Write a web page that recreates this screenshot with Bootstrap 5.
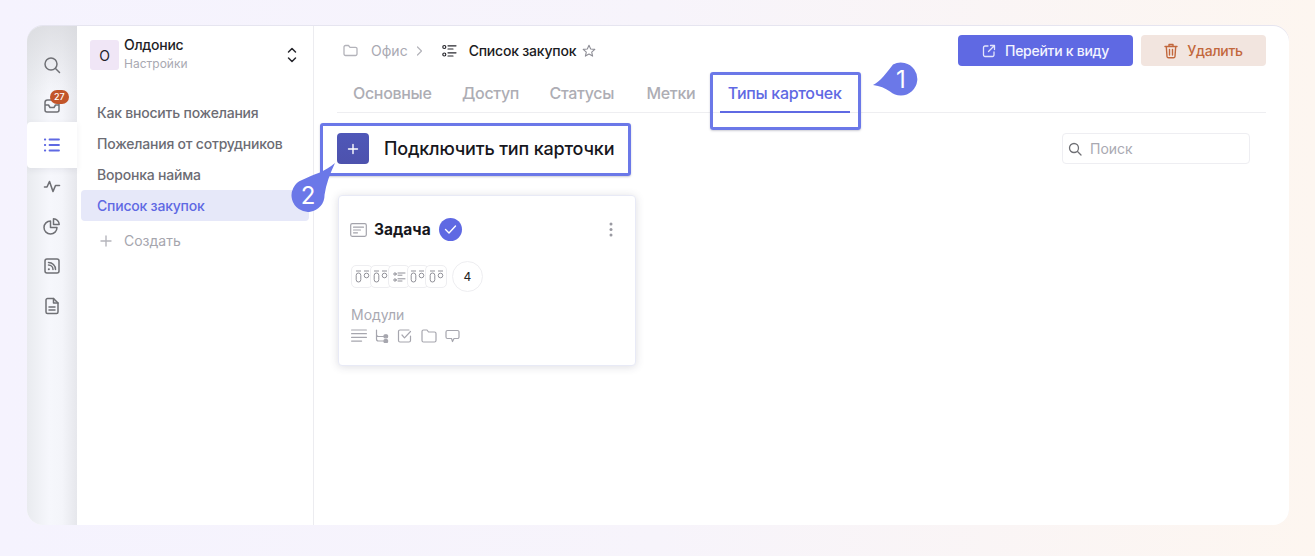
<!DOCTYPE html>
<html lang="ru">
<head>
<meta charset="utf-8">
<title>Типы карточек</title>
<link href="https://cdn.jsdelivr.net/npm/bootstrap@5.3.0/dist/css/bootstrap.min.css" rel="stylesheet">
<style>
html,body{height:100%}
body{margin:0;overflow:hidden;font-family:Inter,"Liberation Sans",sans-serif;background:linear-gradient(90deg,#f5f3fe 0%,#f7f4fb 50%,#fdf6f0 100%);padding:26px 26px 31px 27px}
.app-win{height:499px;background:#fff;border-radius:16px;overflow:hidden;box-shadow:0 -1px 0 #e6e5f0}
.rail{width:50px;flex:none;padding-top:19px;background:linear-gradient(180deg,rgba(215,216,220,.75) 0,rgba(240,241,245,0) 70px),linear-gradient(90deg,#e9ebef 0,#f6f7fc 45%,#f4f5fa 70%,#e6e7ec 100%)}
.rail-btn{height:40px;display:flex;align-items:center;justify-content:center;position:relative;color:#6f7075}
.rail-btn svg{width:18px;height:18px}
.rail-on{height:46px;margin:-3px 0 -2px;background:#fff;border-radius:4px 0 0 4px;color:#5f69e3;box-shadow:0 2px 6px rgba(60,60,90,.08)}
.rail-badge{position:absolute;left:23px;top:5px;background:#c2552a;font-size:9px;font-weight:500;padding:2px 4px;line-height:10px}
.side{width:237px;flex:none;border-right:1px solid #ececf0;padding:13px 4px 0}
.org-ava{width:29px;height:30px;border-radius:3px;background:#f0e6f6;color:#22222a;font-size:14px;flex:none}
.org-txt{margin-left:5px;flex-grow:1}
.org-name{font-size:14px;font-weight:500;letter-spacing:-.02em;line-height:17px;color:#1e1e26;margin-top:-3px}
.org-sub{font-size:12px;line-height:15px;color:#a9a9b2;margin-top:3px}
.side-head{padding:0 11px 0 9px;margin-bottom:26px}
.side-link{height:31px;padding:0 16px;font-size:14px;font-weight:450;letter-spacing:-.015em;line-height:31px;color:#6c6c74;border-radius:4px;text-decoration:none;display:block}
.side-on{background:#e6e8f9;color:#5f69e3}
.side-add{color:#a6a6ae;margin-top:4px;padding-left:18px;display:flex;align-items:center;gap:11px;letter-spacing:0;font-weight:400}
.main-pane{padding:9px 23px 0;min-width:0}
.crumbs{height:31px;padding-left:6px;font-size:14px;color:#a9a9b2}
.crumb-a{margin-left:13px}
.crumb-b{margin-left:11px}
.crumb-c{margin-left:12px;color:#1b1b22;font-weight:500;letter-spacing:-.015em}
.crumb-d{margin-left:6px}
.btn-go,.btn-del{height:31px;font-size:14px;font-weight:500;letter-spacing:-.02em;border:0;border-radius:4px;display:flex;align-items:center;justify-content:center;gap:9px;padding:0}
.btn-go{width:175px;background:#5f69e3;color:#f3f4ff}
.btn-del{width:125px;background:#f2e5df;color:#c2673c;margin-left:8px}
.tabs-row{height:47px;border-bottom:1px solid #eeeef1;padding-left:8px;gap:14.5px;flex-wrap:nowrap}
.tab-lnk{height:47px;padding:0 8px;line-height:54px;font-size:16px;font-weight:500;letter-spacing:-.02em;color:#adadb4;text-decoration:none;position:relative}
.tab-gap{margin-left:2px}
.tab-on{color:#5f69e3;border-bottom:2px solid #5f69e3;height:47px;margin-left:2px}
.add-row{padding-top:20px;padding-right:16px}
.add-sq{width:32px;height:31px;border-radius:4px;background:linear-gradient(180deg,#4f57b8,#4d52ad);color:#fff;border:0;padding:0;display:flex;align-items:center;justify-content:center}
.add-txt{font-size:18px;font-weight:450;letter-spacing:-.01em;color:#17171d;margin-left:15px}
.find-wrap{width:188px;height:31px;border:1px solid #eeeef2;border-radius:4px;padding:0 5px;gap:8px}
.find-input{border:0;outline:0;padding:0;background:transparent;font-size:14px;box-shadow:none;height:28px;color:#333}
.find-input::placeholder{color:#a9a9b2;opacity:1}
.type-card{width:298px;height:171px;margin:31px 0 0 1px;padding:22px 11px 0;border:1px solid #e8eaf6;border-radius:4px;box-shadow:0 1px 8px rgba(50,50,80,.16)}
.type-title{font-size:15.5px;font-weight:700;color:#17171d;margin:1px 0 0 7px}
.type-check{width:23px;height:23px;border-radius:50%;background:#5f69e3;margin-left:8px;display:flex;align-items:center;justify-content:center}
.chip-row{margin:20px 0 0 1px}
.chip{height:23px;width:22px;border:1px solid #eeeef1;border-radius:5px;background:#fff;margin-right:-3.5px;display:flex;align-items:center;justify-content:center}
.chip-end{margin-right:0}
.count-dot{width:31px;height:31px;border:1px solid #eeeef1;border-radius:50%;font-size:12px;margin-left:5px;color:#222}
.mod-lbl{font-size:14px;line-height:17px;color:#a9a9b2;margin:14px 0 0 1px}
.mod-icons{gap:8px;margin:6px 0 0 1px;color:#a6a6ae}
.dots-ico{margin-right:11px}
.mark-box{position:absolute;border:3px solid #6b78e8;border-radius:3px;box-shadow:0 1px 2px rgba(60,60,90,.25);pointer-events:none}
.mark-tab{left:683px;top:46px;width:151px;height:58px}
.mark-add{left:293px;top:97px;width:311px;height:53px}
.call-out{position:absolute;width:50px;height:56px}
.call-one{left:843px;top:34px}
.call-two{left:263px;top:134px}
.call-out text{font-family:Inter,"Liberation Sans",sans-serif;font-size:24px;fill:#fff;text-anchor:middle}
</style>
</head>
<body>
<div class="app-win d-flex position-relative">
  <nav class="rail">
    <div class="rail-btn"><svg viewBox="0 0 18 18" fill="none" stroke="currentColor" stroke-width="1.5" stroke-linecap="round"><circle cx="8" cy="8" r="6"/><path d="M12.500 12.500 16.500 16.500"/></svg></div>
    <div class="rail-btn"><svg viewBox="0 0 18 18" fill="none" stroke="currentColor" stroke-width="1.5" stroke-linejoin="round"><path d="M2 6.500V14a2 2 0 0 0 2 2h10a2 2 0 0 0 2-2V6.500A2.500 2.500 0 0 0 13.500 4h-9A2.500 2.500 0 0 0 2 6.500Z"/><path d="M2 9h3.500L7 11.500h4L12.500 9H16"/></svg><span class="badge rounded-pill rail-badge">27</span></div>
    <div class="rail-btn rail-on"><svg viewBox="0 0 18 18" fill="none" stroke="currentColor" stroke-width="1.800" stroke-linecap="round"><path d="M6.500 3.500H16M6.500 9H16M6.500 14.500H16M1.800 3.500h.5M1.800 9h.5M1.800 14.500h.5"/></svg></div>
    <div class="rail-btn"><svg viewBox="0 0 18 18" fill="none" stroke="currentColor" stroke-width="1.600" stroke-linecap="round" stroke-linejoin="round"><path d="M1.500 10H4l2.500-5.500 3.500 10L12.500 8.500H16.500"/></svg></div>
    <div class="rail-btn"><svg viewBox="0 0 18 18" fill="none" stroke="currentColor" stroke-width="1.500" stroke-linejoin="round"><path d="M7.500 4A6.500 6.500 0 1 0 14 10.500H7.500Z"/><path d="M10.500 1.800A5.800 5.800 0 0 1 16.200 7.500H10.500Z"/></svg></div>
    <div class="rail-btn"><svg viewBox="0 0 18 18" fill="none" stroke="currentColor" stroke-width="1.500" stroke-linecap="round"><rect x="2" y="2" width="14" height="14" rx="2"/><path d="M5.500 8a4.500 4.500 0 0 1 4.500 4.500M5.500 5.500a7 7 0 0 1 7 7"/><path d="M5.800 12.300h.1" stroke-width="2"/></svg></div>
    <div class="rail-btn"><svg viewBox="0 0 18 18" fill="none" stroke="currentColor" stroke-width="1.500" stroke-linecap="round" stroke-linejoin="round"><path d="M3 3a1.500 1.500 0 0 1 1.500-1.500H10.500L15 6V15a1.500 1.500 0 0 1-1.500 1.500h-9A1.500 1.500 0 0 1 3 15Z"/><path d="M10.500 1.500V6H15M6 10h6M6 13h6"/></svg></div>
  </nav>

  <aside class="side">
    <div class="side-head d-flex align-items-center">
      <div class="org-ava d-flex align-items-center justify-content-center">О</div>
      <div class="org-txt">
        <div class="org-name">Олдонис</div>
        <div class="org-sub">Настройки</div>
      </div>
      <svg width="12" height="18" viewBox="0 0 12 18" fill="none" stroke="#26262c" stroke-width="1.500" stroke-linecap="round" stroke-linejoin="round"><path d="M2.500 6 6 2.500 9.500 6M2.500 12 6 15.500 9.500 12"/></svg>
    </div>
    <div class="nav flex-column">
      <a class="side-link" href="#">Как вносить пожелания</a>
      <a class="side-link" href="#">Пожелания от сотрудников</a>
      <a class="side-link" href="#">Воронка найма</a>
      <a class="side-link side-on" href="#">Список закупок</a>
      <a class="side-link side-add" href="#"><svg width="14" height="14" viewBox="0 0 14 14" fill="none" stroke="#b5b5bc" stroke-width="1.400" stroke-linecap="round"><path d="M7 2v10M2 7h10"/></svg>Создать</a>
    </div>
  </aside>

  <main class="main-pane flex-grow-1">
    <div class="d-flex align-items-center">
      <div class="crumbs d-flex align-items-center flex-grow-1">
        <svg width="15" height="13" viewBox="0 0 15 13" fill="none" stroke="#b3b3ba" stroke-width="1.300" stroke-linejoin="round"><path d="M1 3a1.500 1.500 0 0 1 1.500-1.500H5.500L7 3.300h5.500A1.500 1.500 0 0 1 14 4.800V10a1.500 1.500 0 0 1-1.500 1.500h-10A1.500 1.500 0 0 1 1 10Z"/></svg>
        <span class="crumb-a">Офис</span>
        <svg class="mx-2" width="7" height="10" viewBox="0 0 7 10" fill="none" stroke="#b3b3ba" stroke-width="1.200" stroke-linecap="round" stroke-linejoin="round"><path d="M1.500 1 5.500 5l-4 4"/></svg>
        <svg class="crumb-b" width="15" height="14" viewBox="0 0 15 14" fill="none" stroke="#26262c" stroke-width="1.200" stroke-linecap="round"><circle cx="2.300" cy="3" r="1.500"/><circle cx="2.300" cy="10.500" r="1.500"/><path d="M6 1.800h8M6 5h5M6 8.800h8M6 12h5"/></svg>
        <span class="crumb-c">Список закупок</span>
        <svg class="crumb-d" width="14" height="14" viewBox="0 0 14 14" fill="none" stroke="#8e8e96" stroke-width="1.100" stroke-linejoin="round"><path d="M7 1.200 8.700 5l4.100.4-3.100 2.700.9 4L7 10l-3.600 2.100.9-4L1.200 5.400 5.300 5Z"/></svg>
      </div>
      <button class="btn btn-go" type="button"><svg width="14" height="14" viewBox="0 0 14 14" fill="none" stroke="#e3e5fb" stroke-width="1.300" stroke-linecap="round" stroke-linejoin="round"><path d="M6 2H3a1.500 1.500 0 0 0-1.500 1.500v7.500A1.500 1.500 0 0 0 3 12.500h7.500A1.500 1.500 0 0 0 12 11V8M8.500 1.500h4v4M12.500 1.500 6.500 7.500"/></svg>Перейти к виду</button>
      <button class="btn btn-del" type="button"><svg width="14" height="16" viewBox="0 0 14 16" fill="none" stroke="#c2673c" stroke-width="1.400" stroke-linecap="round" stroke-linejoin="round"><path d="M1 3.500h12M5 3.500V1.500h4v2M2.300 3.500l.7 10a1.500 1.500 0 0 0 1.500 1.300h5a1.500 1.500 0 0 0 1.500-1.300l.7-10M5.500 6.500v5.500M8.500 6.500v5.500"/></svg>Удалить</button>
    </div>

    <div class="nav tabs-row">
      <a class="tab-lnk" href="#">Основные</a>
      <a class="tab-lnk" href="#">Доступ</a>
      <a class="tab-lnk" href="#">Статусы</a>
      <a class="tab-lnk tab-gap" href="#">Метки</a>
      <a class="tab-lnk tab-on" href="#">Типы карточек</a>
    </div>

    <div class="add-row d-flex align-items-center justify-content-between">
      <div class="d-flex align-items-center">
        <button class="add-sq" type="button" aria-label="Добавить"><svg width="12" height="12" viewBox="0 0 12 12" fill="none" stroke="#fff" stroke-width="1.400" stroke-linecap="round"><path d="M6 1.500v9M1.500 6h9"/></svg></button>
        <span class="add-txt">Подключить тип карточки</span>
      </div>
      <label class="find-wrap d-flex align-items-center m-0">
        <svg width="14" height="14" viewBox="0 0 14 14" fill="none" stroke="#6f7075" stroke-width="1.300" stroke-linecap="round" class="flex-shrink-0"><circle cx="6" cy="6" r="4.500"/><path d="m9.500 9.500 3.500 3.500"/></svg>
        <input class="find-input form-control" type="text" placeholder="Поиск">
      </label>
    </div>

    <div class="card type-card">
      <div class="d-flex align-items-center">
        <svg width="17" height="14" viewBox="0 0 17 14" fill="none" stroke="#a3a3ab" stroke-width="1.200" stroke-linecap="round"><rect x=".7" y=".7" width="15.600" height="12.600" rx="1.500"/><path d="M3.500 4.200h10M3.500 7h7M3.500 9.800h4"/></svg>
        <h6 class="type-title">Задача</h6>
        <div class="type-check"><svg width="13" height="11" viewBox="0 0 13 11" fill="none" stroke="#fff" stroke-width="1.400" stroke-linecap="round" stroke-linejoin="round"><path d="m1.500 5.500 3.500 3.500 6.500-7"/></svg></div>
        <svg class="ms-auto dots-ico" width="4" height="15" viewBox="0 0 4 15" fill="#9a9aa2"><circle cx="2" cy="2" r="1.500"/><circle cx="2" cy="7.500" r="1.500"/><circle cx="2" cy="13" r="1.500"/></svg>
      </div>
      <div class="chip-row d-flex align-items-center">
        <div class="chip"><svg width="15" height="13" viewBox="0 0 15 13" fill="none" stroke="#85858d" stroke-width=".9"><path d="M1 1h5M9 1h5"/><rect x="1.200" y="3" width="4.600" height="9" rx="2.300"/><circle cx="11.500" cy="5.500" r="2.300"/></svg></div>
        <div class="chip"><svg width="15" height="13" viewBox="0 0 15 13" fill="none" stroke="#85858d" stroke-width=".9"><path d="M1 1h5M9 1h5"/><rect x="1.200" y="3" width="4.600" height="9" rx="2.300"/><circle cx="11.500" cy="5.500" r="2.300"/></svg></div>
        <div class="chip"><svg width="13" height="10" viewBox="0 0 13 10" fill="none" stroke="#85858d" stroke-width=".9" stroke-linecap="round"><circle cx="2" cy="2" r="1.200"/><circle cx="2" cy="8" r="1.200"/><path d="M5 1h7M5 3.200h4M5 6.800h7M5 9h4"/></svg></div>
        <div class="chip"><svg width="15" height="13" viewBox="0 0 15 13" fill="none" stroke="#85858d" stroke-width=".9"><path d="M1 1h5M9 1h5"/><rect x="1.200" y="3" width="4.600" height="9" rx="2.300"/><circle cx="11.500" cy="5.500" r="2.300"/></svg></div>
        <div class="chip chip-end"><svg width="15" height="13" viewBox="0 0 15 13" fill="none" stroke="#85858d" stroke-width=".9"><path d="M1 1h5M9 1h5"/><rect x="1.200" y="3" width="4.600" height="9" rx="2.300"/><circle cx="11.500" cy="5.500" r="2.300"/></svg></div>
        <div class="count-dot d-flex align-items-center justify-content-center">4</div>
      </div>
      <div class="mod-lbl">Модули</div>
      <div class="mod-icons d-flex align-items-center">
        <svg width="16" height="14" viewBox="0 0 16 14" fill="none" stroke="currentColor" stroke-width="1.200" stroke-linecap="round"><path d="M.6 1h14.800M.6 4.700h14.800M.6 8.400h14.800M.6 12.100h10"/></svg>
        <svg width="14" height="14" viewBox="0 0 14 14" fill="none" stroke="currentColor" stroke-width="1.200" stroke-linecap="round" stroke-linejoin="round"><path d="M1.500 1v9a2 2 0 0 0 2 2h5M1.500 5.500a2 2 0 0 0 2 2h5"/><rect x="9" y="5.800" width="3.600" height="3" rx="1" fill="currentColor"/><rect x="9" y="10.500" width="3.600" height="3" rx="1" fill="currentColor"/></svg>
        <svg width="16" height="14" viewBox="0 0 16 14" fill="none" stroke="currentColor" stroke-width="1.200" stroke-linecap="round" stroke-linejoin="round"><path d="M13.500 7v4.500a1.500 1.500 0 0 1-1.500 1.500H3a1.500 1.500 0 0 1-1.500-1.500v-9A1.500 1.500 0 0 1 3 1h9"/><path d="m5 6 2.500 2.800L13.500 2.500"/></svg>
        <svg width="16" height="14" viewBox="0 0 16 14" fill="none" stroke="currentColor" stroke-width="1.200" stroke-linejoin="round"><path d="M1 2.500A1.500 1.500 0 0 1 2.500 1H6l1.500 2h6A1.500 1.500 0 0 1 15 4.500V11.500A1.500 1.500 0 0 1 13.500 13h-11A1.500 1.500 0 0 1 1 11.500Z"/></svg>
        <svg width="15" height="14" viewBox="0 0 15 14" fill="none" stroke="currentColor" stroke-width="1.200" stroke-linejoin="round"><path d="M2.500 1.500h10A1.500 1.500 0 0 1 14 3v5a1.500 1.500 0 0 1-1.500 1.500H9L7.500 12.500 6.500 9.500h-4A1.500 1.500 0 0 1 1 8V3a1.500 1.500 0 0 1 1.500-1.500Z"/></svg>
      </div>
    </div>
  </main>

  <div class="mark-box mark-tab"></div>
  <div class="mark-box mark-add"></div>
  <svg class="call-out call-one" viewBox="0 0 50 56"><path fill="#6b78e8" d="M3 25C10 22 17 12 23 4.500A16.500 16.500 0 1 1 20 31.500C15 28 10 26 3 25Z"/><text x="31" y="28">1</text></svg>
  <svg class="call-out call-two" viewBox="0 0 50 56"><path fill="#6b78e8" d="M45 3C35 12 24 14 12 20A16.500 16.500 0 1 0 34.500 35C36 24 40 14 45 3Z"/><text x="18" y="44">2</text></svg>
</div>
<script src="https://cdn.jsdelivr.net/npm/bootstrap@5.3.0/dist/js/bootstrap.bundle.min.js"></script>
</body>
</html>
